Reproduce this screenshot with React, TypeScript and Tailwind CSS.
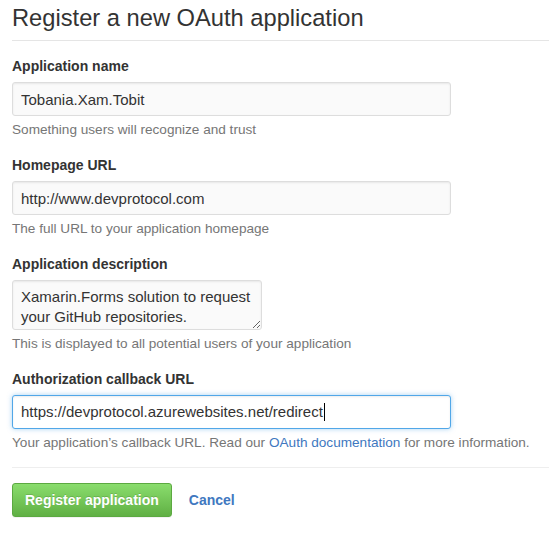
import type { ReactNode } from "react";

const font = "font-['Liberation_Sans',Arial,sans-serif]";

const inputBase =
  "block h-[34px] w-[439px] rounded-[3px] border px-2 text-[15px] leading-5 text-[#333] outline-none";

function Group({
  label,
  note,
  children,
}: {
  label: string;
  note: ReactNode;
  children: ReactNode;
}) {
  return (
    <div className="mt-[15px]">
      <label className="mb-[6px] block text-[14px] font-bold leading-5 text-[#333]">
        {label}
      </label>
      {children}
      <p className="mt-1 text-[13.6px] leading-5 text-[#767676]">{note}</p>
    </div>
  );
}

export default function App() {
  return (
    <div className={`${font} min-h-screen bg-white pl-3 text-[#333]`}>
      <h2 className="border-b border-[#e5e5e5] pb-[4px] text-[23.7px] font-normal leading-9 text-[#333]">
        Register a new OAuth application
      </h2>

      <form>
        <Group label="Application name" note="Something users will recognize and trust">
          <input
            readOnly
            value="Tobania.Xam.Tobit"
            className={`${inputBase} border-[#ddd] bg-[#fafafa] shadow-[inset_0_1px_2px_rgba(0,0,0,0.075)]`}
          />
        </Group>

        <Group label="Homepage URL" note="The full URL to your application homepage">
          <input
            readOnly
            value="http://www.devprotocol.com"
            className={`${inputBase} border-[#ddd] bg-[#fafafa] shadow-[inset_0_1px_2px_rgba(0,0,0,0.075)]`}
          />
        </Group>

        <Group
          label="Application description"
          note="This is displayed to all potential users of your application"
        >
          <textarea
            readOnly
            value={"Xamarin.Forms solution to request your GitHub repositories."}
            className="block h-[50px] w-[250px] resize rounded-[3px] border border-[#ddd] bg-[#fafafa] px-2 py-[6px] text-[15px] leading-5 text-[#333] shadow-[inset_0_1px_2px_rgba(0,0,0,0.075)] outline-none"
          />
        </Group>

        <Group
          label="Authorization callback URL"
          note={
            <>
              Your application’s callback URL. Read our{" "}
              <a href="#" className="text-[#4078c0]">
                OAuth documentation
              </a>{" "}
              for more information.
            </>
          }
        >
          <div
            className={`${inputBase} flex items-center border-[#51a7e8] bg-white shadow-[inset_0_1px_2px_rgba(0,0,0,0.075),0_0_5px_rgba(81,167,232,0.5)]`}
          >
            <span>https://devprotocol.azurewebsites.net/redirect</span>
            <span className="ml-px h-[18px] w-px bg-black" />
          </div>
        </Group>

        <div className="mt-[14px] flex items-center gap-[17px] border-t border-[#eee] pt-[15px]">
          <button
            type="button"
            className="h-[34px] rounded-[3px] border border-[#5ca941] bg-[linear-gradient(#8add6d,#60b044)] px-3 text-[14px] font-bold text-white shadow-[0_1px_0_rgba(0,0,0,0.05)] [text-shadow:0_-1px_0_rgba(0,0,0,0.15)]"
          >
            Register application
          </button>
          <a href="#" className="text-[14px] font-bold text-[#4078c0]">
            Cancel
          </a>
        </div>
      </form>
    </div>
  );
}
